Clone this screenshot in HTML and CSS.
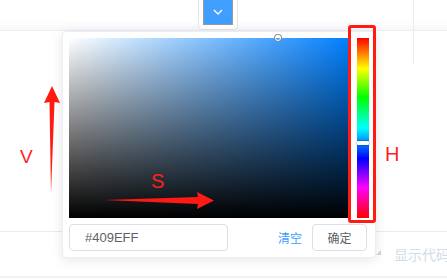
FILE: index.html
```html
<!DOCTYPE html>
<html lang="zh-CN">
<head>
    <meta charset="UTF-8">
    <title>Color Picker</title>
    <link rel="stylesheet" href="styles.css">
</head>
<body>
    <div class="page">
        <div class="source">
            <div class="demo-row">
                <div class="trigger">
                    <span class="trigger-color">
                        <svg width="10" height="6" viewBox="0 0 10 6"><path d="M1 1l4 4 4-4" fill="none" stroke="#fff" stroke-width="1.4"/></svg>
                    </span>
                </div>
                <div class="divider-v"></div>
            </div>
            <div class="spacer"></div>
            <div class="meta">
                <span class="caret"></span>
                <span class="show-code">显示代码</span>
            </div>
        </div>

        <div class="picker">
            <div class="picker-main">
                <div class="sv-panel">
                    <div class="sv-white"></div>
                    <div class="sv-black"></div>
                    <span class="sv-cursor"></span>
                </div>
                <div class="hue-slider">
                    <span class="hue-thumb"></span>
                </div>
            </div>
            <div class="picker-footer">
                <div class="value-input">#409EFF</div>
                <span class="clear-link">清空</span>
                <button class="confirm-btn">确定</button>
            </div>
        </div>

        <div class="note-box"></div>
        <div class="note note-v">V</div>
        <div class="note note-s">S</div>
        <div class="note note-h">H</div>
        <svg class="arrows" width="447" height="279" viewBox="0 0 447 279">
            <path d="M51 193 L49.5 102 L44 103 L52 86 L60 103 L54.5 102 Z" fill="#ff1a12"/>
            <path d="M104 200 L198 197 L197 192 L214 200.5 L197 209 L198 204 Z" fill="#ff1a12"/>
        </svg>
    </div>
</body>
</html>
```

FILE: styles.css
```css
body {
    margin: 0;
    padding: 0;
    font-family: "Liberation Sans", "Noto Sans CJK SC", sans-serif;
    background-color: #fff;
}

.page {
    position: relative;
    width: 447px;
    height: 279px;
    overflow: hidden;
}

/* background demo block */
.source {
    display: flex;
    flex-direction: column;
    height: 279px;
}

.demo-row {
    display: flex;
    height: 30px;
    border-bottom: 1px solid #eeeef3;
    background: linear-gradient(to bottom, #fff 70%, #f8f8fb);
}

.trigger {
    box-sizing: border-box;
    width: 40px;
    height: 36px;
    margin: -6px 0 0 198px;
    padding: 4px;
    border: 1px solid #e6e6e6;
    border-radius: 4px;
    background: #fff;
}

.trigger-color {
    display: flex;
    justify-content: center;
    align-items: center;
    height: 100%;
    background-color: #409eff;
    border: 1px solid #999;
    box-sizing: border-box;
}

.divider-v {
    width: 1px;
    height: 63px;
    margin-left: 175px;
    background-color: #ececec;
}

.spacer {
    height: 200px;
    border-bottom: 1px solid #e9e9f2;
}

.meta {
    display: flex;
    align-items: center;
    height: 44px;
    border-bottom: 2px solid #f0f0f5;
}

.caret {
    flex-shrink: 0;
    width: 0;
    height: 0;
    margin: 0 0 4px 376px;
    border-left: 5px solid transparent;
    border-bottom: 5px solid #d0d5de;
}

.show-code {
    flex-shrink: 0;
    margin-left: 13px;
    font-size: 14px;
    white-space: nowrap;
    color: #d3dce6;
}

/* dropdown */
.picker {
    position: absolute;
    left: 62px;
    top: 31px;
    width: 300px;
    padding: 6px;
    background-color: #fff;
    border: 1px solid #ebeef5;
    border-radius: 4px;
    box-shadow: 0 2px 12px rgba(0, 0, 0, 0.1);
}

.picker-main {
    display: flex;
    gap: 7px;
}

.sv-panel {
    position: relative;
    width: 281px;
    height: 180px;
    background-color: #0080ff;
}

.sv-white,
.sv-black {
    position: absolute;
    top: 0;
    left: 0;
    right: 0;
    bottom: 0;
}

.sv-white {
    background: linear-gradient(to right, #fff, rgba(255, 255, 255, 0));
}

.sv-black {
    background: linear-gradient(to top, #000, rgba(0, 0, 0, 0));
}

.sv-cursor {
    position: absolute;
    left: 206px;
    top: -3px;
    width: 4px;
    height: 4px;
    border: 1px solid #fff;
    border-radius: 50%;
    box-shadow: 0 0 0 1px #888;
}

.hue-slider {
    position: relative;
    width: 12px;
    height: 180px;
    background: linear-gradient(to bottom, #f00 0%, #ff0 17%, #0f0 33%, #0ff 50%, #00f 67%, #f0f 83%, #f00 100%);
}

.hue-thumb {
    position: absolute;
    left: 0;
    top: 103px;
    width: 12px;
    height: 4px;
    background-color: #fff;
    border-radius: 1px;
    box-shadow: 0 0 2px rgba(0, 0, 0, 0.6);
}

.picker-footer {
    display: flex;
    align-items: center;
    margin-top: 6px;
}

.value-input {
    box-sizing: border-box;
    width: 159px;
    height: 27px;
    line-height: 25px;
    padding-left: 15px;
    font-size: 13px;
    color: #606266;
    border: 1px solid #dcdfe6;
    border-radius: 4px;
}

.clear-link {
    margin-left: 50px;
    font-size: 12px;
    color: #409eff;
}

.confirm-btn {
    width: 55px;
    height: 27px;
    margin-left: 10px;
    padding: 0;
    font-family: inherit;
    font-size: 12px;
    color: #606266;
    background-color: #fff;
    border: 1px solid #dcdfe6;
    border-radius: 4px;
}

/* annotations */
.note-box {
    position: absolute;
    left: 348px;
    top: 25px;
    width: 22px;
    height: 192px;
    border: 3px solid #ff1a12;
    border-radius: 3px;
}

.note {
    position: absolute;
    color: #ff1f1f;
    font-family: "Liberation Sans", sans-serif;
    font-size: 20px;
    line-height: 20px;
}

.note-v {
    left: 20px;
    top: 147px;
    font-size: 19px;
}

.note-s {
    left: 151px;
    top: 171px;
}

.note-h {
    left: 385px;
    top: 144px;
}

.arrows {
    position: absolute;
    left: 0;
    top: 0;
}
```
